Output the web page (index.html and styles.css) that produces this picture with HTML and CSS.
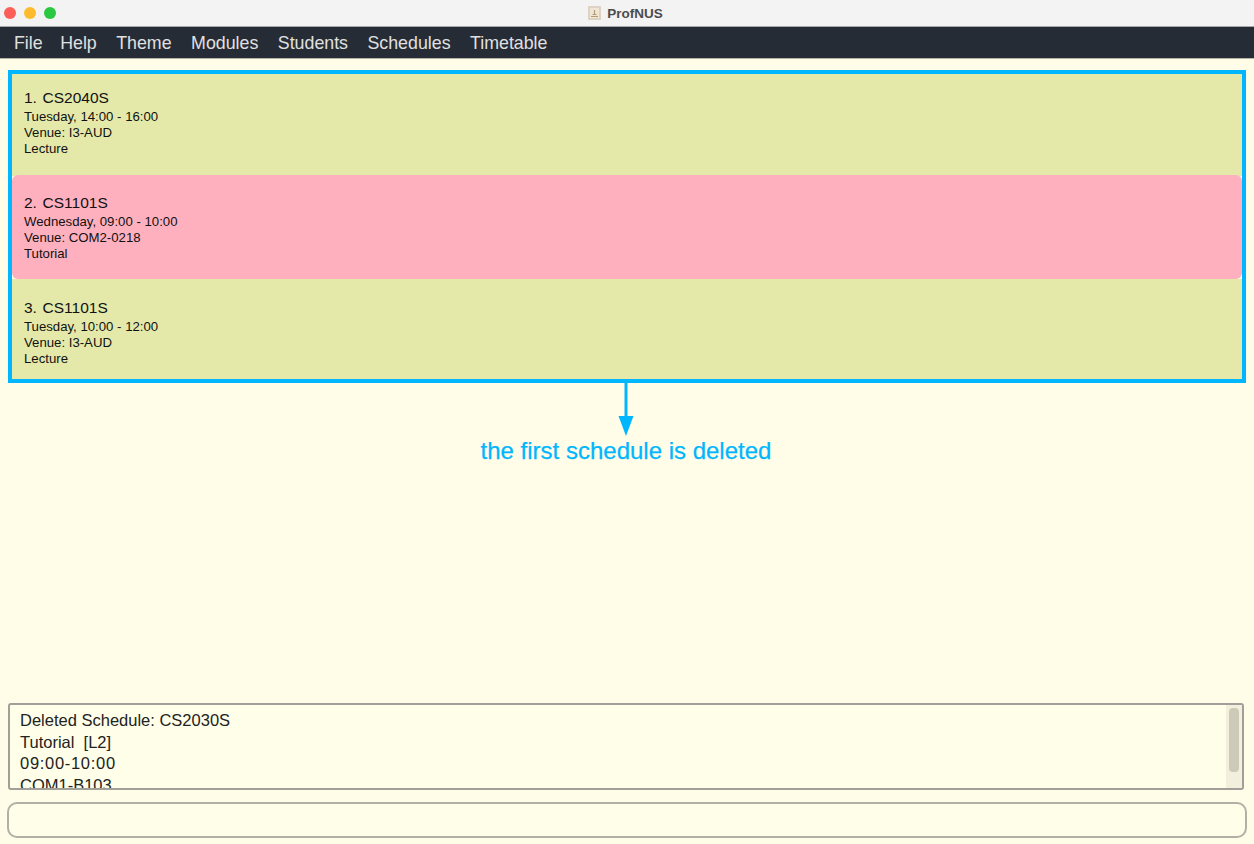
FILE: index.html
```html
<!DOCTYPE html>
<html>
<head>
    <title>ProfNUS</title>
    <link rel="stylesheet" href="styles.css">
</head>
<body>
    <div class="titleBar">
        <div class="lights">
            <span class="light red"></span>
            <span class="light yellow"></span>
            <span class="light green"></span>
        </div>
        <div class="windowTitle">
            <svg class="appIcon" width="13" height="14" viewBox="0 0 13 14">
                <rect width="13" height="14" fill="#dcd3c4"/>
                <rect x="2" y="2" width="9" height="10" fill="#efe6d6"/>
                <path d="M6.500 4v4M4.500 8.500h4M3 10.500h7" stroke="#b59a78" stroke-width="1.200" fill="none"/>
            </svg>
            <span>ProfNUS</span>
        </div>
    </div>
    <div class="menuBar">
        <span>File</span>
        <span>Help</span>
        <span>Theme</span>
        <span>Modules</span>
        <span>Students</span>
        <span>Schedules</span>
        <span>Timetable</span>
    </div>
    <div class="main">
        <div class="scheduleList">
            <div class="card green">
                <div class="cardTitle">1.&nbsp; CS2040S</div>
                <div>Tuesday, 14:00 - 16:00</div>
                <div>Venue: I3-AUD</div>
                <div>Lecture</div>
            </div>
            <div class="card pink">
                <div class="cardTitle">2.&nbsp; CS1101S</div>
                <div>Wednesday, 09:00 - 10:00</div>
                <div>Venue: COM2-0218</div>
                <div>Tutorial</div>
            </div>
            <div class="card green">
                <div class="cardTitle">3.&nbsp; CS1101S</div>
                <div>Tuesday, 10:00 - 12:00</div>
                <div>Venue: I3-AUD</div>
                <div>Lecture</div>
            </div>
            <div class="note">
                <svg class="noteArrow" width="20" height="53" viewBox="0 0 20 53">
                    <path d="M8.500 0h3v36h-3z" fill="#00b6ff"/>
                    <path d="M2.500 33h15L10 53z" fill="#00b6ff"/>
                </svg>
                <div class="noteText">the first schedule is deleted</div>
            </div>
        </div>
        <div class="resultBox">
            <div class="resultText">
                <div>Deleted Schedule: CS2030S</div>
                <div>Tutorial&nbsp; [L2]</div>
                <div class="timeLine">09:00-10:00</div>
                <div>COM1-B103</div>
            </div>
            <div class="scrollTrack"><div class="scrollThumb"></div></div>
        </div>
        <div class="commandBox"></div>
    </div>
</body>
</html>
```

FILE: styles.css
```css
html, body {
    margin: 0;
    height: 100%;
    overflow: hidden;
}
body {
    display: flex;
    flex-direction: column;
    height: 844px;
    font-family: "Liberation Sans", Arial, sans-serif;
    background-color: #fffde7;
    color: #1a1a1a;
}
.titleBar {
    height: 26px;
    flex: none;
    display: flex;
    align-items: center;
    justify-content: center;
    position: relative;
    background-color: #f3f3f3;
    border-bottom: 1px solid #a8a8a8;
}
.lights {
    position: absolute;
    left: 4px;
    top: 7px;
    display: flex;
    gap: 8px;
}
.light {
    width: 12px;
    height: 12px;
    border-radius: 50%;
}
.red {
    background-color: #fc5f57;
}
.yellow {
    background-color: #febb2e;
}
.green {
    background-color: #28c840;
}
.windowTitle {
    display: flex;
    align-items: center;
    gap: 6px;
    margin-left: -3px;
    font-size: 13.500px;
    font-weight: bold;
    color: #4c4c4c;
}
.menuBar {
    height: 29px;
    flex: none;
    display: flex;
    align-items: center;
    gap: 19.500px;
    padding: 2px 0 0 14px;
    font-size: 17.800px;
    color: #e0e0e0;
    background-color: #262c35;
    border-bottom: 1px solid #b5b5a8;
}
.menuBar span:first-child {
    margin-right: -2px;
}
.main {
    flex: 1;
    display: flex;
    flex-direction: column;
    padding: 11px 8px 6px 8px;
}
.scheduleList {
    position: relative;
    flex: none;
    border: 4px solid #00b6ff;
    margin-bottom: 320px;
}
.card {
    height: 102px;
    box-sizing: border-box;
    padding: 13px 0 0 12px;
    font-size: 13.200px;
    line-height: 16px;
    color: #111;
}
.card.green {
    background-color: #e4e9a9;
}
.card.pink {
    height: 104px;
    margin-top: -1px;
    padding-top: 17px;
    background-color: #ffb0be;
    border-radius: 6px;
}
.card.pink + .card.green {
    height: 100px;
    padding-top: 18px;
    margin-top: 0;
}
.cardTitle {
    font-size: 15.500px;
    line-height: 22px;
    word-spacing: -1.500px;
}
.note {
    position: absolute;
    top: 100%;
    left: 0;
    right: 2px;
    margin-top: 4px;
    display: flex;
    flex-direction: column;
    align-items: center;
}
.noteArrow {
    display: block;
}
.noteText {
    margin-top: 1px;
    font-size: 24px;
    line-height: 28px;
    color: #00b6ff;
    -webkit-text-stroke: 0.250px #00b6ff;
}
.resultBox {
    height: 87px;
    flex: none;
    box-sizing: border-box;
    display: flex;
    justify-content: space-between;
    overflow: hidden;
    margin-right: 2px;
    border: 2px solid #a0a098;
    border-radius: 3px;
    background-color: #fffee8;
}
.resultText {
    padding: 5px 0 0 10px;
    font-size: 16.500px;
    line-height: 21.700px;
    color: #222;
}
.timeLine {
    letter-spacing: 0.700px;
}
.scrollTrack {
    width: 16px;
    padding: 3px 3px 0 3px;
    box-sizing: border-box;
    background-color: #f2efdc;
}
.scrollThumb {
    height: 64px;
    border-radius: 4px;
    background-color: #cdcbb8;
}
.commandBox {
    height: 36px;
    margin: 12px -1px 0 -1px;
    box-sizing: border-box;
    border: 2px solid #b0b0a6;
    border-radius: 10px;
    background-color: #fffee8;
}
```
